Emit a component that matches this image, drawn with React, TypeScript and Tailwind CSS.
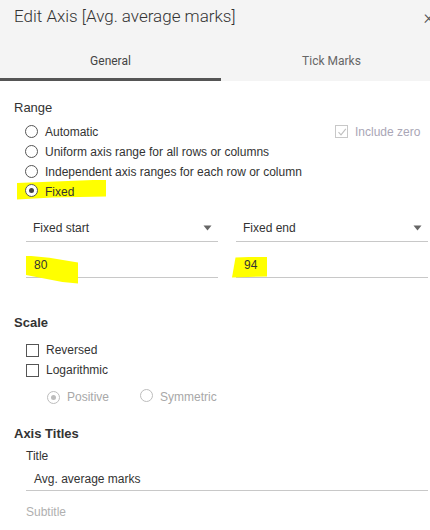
import React from 'react';

const Radio: React.FC<{ checked?: boolean; disabled?: boolean }> = ({ checked, disabled }) => (
  <span
    className={`relative inline-block w-[13px] h-[13px] rounded-full border bg-white shrink-0 ${
      disabled ? 'border-[#bdbdbd]' : 'border-[#555]'
    }`}
  >
    {checked && (
      <span
        className={`absolute left-[3px] top-[3px] w-[5px] h-[5px] rounded-full ${
          disabled ? 'bg-[#bdbdbd]' : 'bg-[#444]'
        }`}
      />
    )}
  </span>
);

const Checkbox: React.FC<{ checked?: boolean; disabled?: boolean }> = ({ checked, disabled }) => (
  <span
    className={`relative inline-flex items-center justify-center w-[13px] h-[13px] border bg-white shrink-0 ${
      disabled ? 'border-[#c8c8c8]' : 'border-[#555]'
    }`}
  >
    {checked && (
      <svg width="10" height="10" viewBox="0 0 10 10" fill="none">
        <path d="M1.5 5.2 L4 7.8 L8.8 1.8" stroke={disabled ? '#c0c0c0' : '#444'} strokeWidth="1.1" />
      </svg>
    )}
  </span>
);

const Caret = () => (
  <svg width="9" height="6" viewBox="0 0 9 6" className="shrink-0">
    <path d="M0.5 0.5 L8.5 0.5 L4.5 5.5 Z" fill="#666" />
  </svg>
);

const RadioRow: React.FC<{ label: string; checked?: boolean; children?: React.ReactNode }> = ({
  label,
  checked,
  children,
}) => (
  <div className="relative flex items-center h-[20px] pl-[25px] gap-[7px]">
    <Radio checked={checked} />
    <span className="relative text-[12px] text-[#333]">{label}</span>
    {children}
  </div>
);

export default function App() {
  return (
    <div className="relative w-[430px] h-[530px] overflow-hidden bg-white font-['Liberation_Sans',Arial,sans-serif] text-[#333]">
      <div className="w-[442px]">
        {/* header */}
        <div className="bg-[#f4f4f4] h-[81px] flex flex-col">
          <div className="flex items-center justify-between pl-[14px] pr-[8px] pt-[3px] h-[30px]">
            <span className="font-['Roboto',sans-serif] font-light text-[17px] text-[#333]">
              Edit Axis [Avg. average marks]
            </span>
            <span className="font-['Roboto',sans-serif] font-light text-[20px] text-[#555] leading-none">×</span>
          </div>
          <div className="flex mt-auto">
            <div className="w-[221px] h-[38px] flex flex-col">
              <div className="flex-1 flex items-center justify-center font-['Roboto',sans-serif] text-[12px] text-[#444]">
                General
              </div>
              <div className="h-[3px] bg-[#555]" />
            </div>
            <div className="w-[221px] h-[38px] flex flex-col">
              <div className="flex-1 flex items-center justify-center font-['Roboto',sans-serif] text-[12px] text-[#666]">
                Tick Marks
              </div>
              <div className="h-[3px]" />
            </div>
          </div>
        </div>

        {/* Range */}
        <div className="pl-[14px] pt-[17px] text-[13px] text-[#333]">Range</div>
        <div className="mt-[4px] flex flex-col">
          <RadioRow label="Automatic">
            <div className="ml-auto w-[107px] flex items-center gap-[7px]">
              <Checkbox checked disabled />
              <span className="text-[12px] text-[#a9a6b6]">Include zero</span>
            </div>
          </RadioRow>
          <RadioRow label="Uniform axis range for all rows or columns" />
          <RadioRow label="Independent axis ranges for each row or column" />
          <div className="relative flex items-center h-[20px] pl-[25px] gap-[7px]">
            <span className="absolute left-[17px] top-[-2px] w-[89px] h-[20px] bg-[#ffff00] [clip-path:polygon(0_18%,100%_0,100%_85%,40%_90%,0_100%)]" />
            <span className="relative">
              <Radio checked />
            </span>
            <span className="relative text-[12px] text-[#333]">Fixed</span>
          </div>
        </div>

        {/* fixed start/end */}
        <div className="flex pl-[26px] gap-[18px] mt-[13px]">
          <div className="w-[192px]">
            <div className="flex items-center justify-between h-[27px] border-b border-[#c8c8c8] pl-[7px] pr-[6px]">
              <span className="text-[12px] text-[#333]">Fixed start</span>
              <Caret />
            </div>
            <div className="relative flex items-center h-[36px] border-b border-[#c8c8c8] pl-[8px] pt-[12px]">
              <span className="absolute left-0 top-[14px] w-[52px] h-[28px] bg-[#ffff00] [clip-path:polygon(0_0,45%_8%,100%_25%,100%_100%,70%_95%,0_70%)]" />
              <span className="relative text-[12px] text-[#333]">80</span>
            </div>
          </div>
          <div className="w-[192px]">
            <div className="flex items-center justify-between h-[27px] border-b border-[#c8c8c8] pl-[7px] pr-[6px]">
              <span className="text-[12px] text-[#333]">Fixed end</span>
              <Caret />
            </div>
            <div className="relative flex items-center h-[36px] border-b border-[#c8c8c8] pl-[8px] pt-[12px]">
              <span className="absolute left-[-4px] top-[15px] w-[35px] h-[21px] bg-[#ffff00] [clip-path:polygon(10%_5%,100%_0,100%_95%,0_100%)]" />
              <span className="relative text-[12px] text-[#333]">94</span>
            </div>
          </div>
        </div>

        {/* Scale */}
        <div className="pl-[14px] mt-[35px] text-[13px] font-bold text-[#333]">Scale</div>
        <div className="mt-[8px] flex flex-col pl-[26px]">
          <div className="flex items-center h-[20px] gap-[7px]">
            <Checkbox />
            <span className="text-[12px] text-[#333]">Reversed</span>
          </div>
          <div className="flex items-center h-[20px] gap-[7px]">
            <Checkbox />
            <span className="text-[12px] text-[#333]">Logarithmic</span>
          </div>
          <div className="flex items-center h-[20px] mt-[7px] pl-[21px]">
            <Radio checked disabled />
            <span className="ml-[7px] text-[12px] text-[#a8a8a8]">Positive</span>
            <span className="ml-[31px]">
              <Radio disabled />
            </span>
            <span className="ml-[7px] text-[12px] text-[#a8a8a8]">Symmetric</span>
          </div>
        </div>

        {/* Axis titles */}
        <div className="pl-[14px] mt-[17px] text-[13px] font-bold text-[#333]">Axis Titles</div>
        <div className="pl-[26px] mt-[3px] text-[12px] text-[#333]">Title</div>
        <div className="ml-[26px] w-[402px] mt-[4px] h-[22px] flex items-center pl-[8px] border-b border-[#c8c8c8] text-[12px] text-[#333]">
          Avg. average marks
        </div>
        <div className="pl-[26px] mt-[12px] text-[12px] text-[#b0b0b0]">Subtitle</div>
      </div>
    </div>
  );
}
